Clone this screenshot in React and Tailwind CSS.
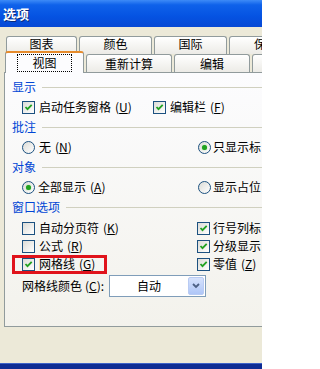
import React from "react";

const font = { fontFamily: '"Noto Sans CJK SC", "Noto Sans", sans-serif' };

function CheckBox({ checked }) {
  return (
    <span className="relative inline-block w-[13px] h-[13px] shrink-0 border border-[#1C5180] bg-gradient-to-br from-[#DCDCD7] to-[#FFFFFF]">
      {checked && (
        <svg viewBox="0 0 11 11" className="absolute left-0 top-0 w-[11px] h-[11px]">
          <path d="M2.5 5 L4.5 7.2 L8.7 2.8" fill="none" stroke="#21A121" strokeWidth="1.8" />
        </svg>
      )}
    </span>
  );
}

function Radio({ checked }) {
  return (
    <span className="flex items-center justify-center w-[13px] h-[13px] shrink-0 rounded-full border border-[#1C5180] bg-gradient-to-br from-[#DCDCD7] to-[#FFFFFF]">
      {checked && <span className="w-[5px] h-[5px] rounded-full bg-[#21A121] shadow-[0_0_1px_#55D551]" />}
    </span>
  );
}

function Key({ k }) {
  return (
    <span className="ml-[4px]">
      (<span className="underline">{k}</span>)
    </span>
  );
}

function Heading({ children }) {
  return (
    <div className="flex items-center h-[20px] pl-[7px]">
      <span className="text-[#0046D5]">{children}</span>
      <div className="flex-1 h-px bg-[#D0D0BF] ml-[6px]" />
    </div>
  );
}

function Item({ box, label, k, gap = "gap-[4px]" }) {
  return (
    <div className={`flex items-center ${gap} whitespace-nowrap`}>
      {box}
      <span>
        {label}
        {k && <Key k={k} />}
      </span>
    </div>
  );
}

function BackTab({ w, label, align = "justify-center" }) {
  return (
    <div
      className={`${w} h-[18px] mr-[2px] shrink-0 flex ${align} pt-[1px] border border-b-0 border-[#919B9C] rounded-t-[3px] bg-gradient-to-b from-[#FFFFFF] to-[#ECEBE6]`}
    >
      {label}
    </div>
  );
}

function FrontTab({ w, label }) {
  return (
    <div
      className={`${w} h-[18px] mr-[2px] shrink-0 flex items-center justify-center border border-b-0 border-[#919B9C] rounded-t-[3px] bg-gradient-to-b from-[#FFFFFF] to-[#ECEBE6]`}
    >
      {label}
    </div>
  );
}

export default function App() {
  return (
    <div className="w-[262px] h-[369px] overflow-hidden bg-[#ECE9D8] flex flex-col text-[12px] leading-none text-black" style={font}>
      {/* title bar */}
      <div className="h-[27px] shrink-0 flex items-center pl-[3px] bg-[linear-gradient(to_bottom,#3D8BF7_0%,#0F62EA_18%,#0553E2_60%,#0748D4_100%)]">
        <span className="text-white font-bold text-[13px] [text-shadow:1px_1px_0_#0A2A7A]">选项</span>
      </div>

      {/* tabs */}
      <div className="mt-[9px] h-[18px] flex pl-[6px] shrink-0">
        <BackTab w="w-[71px]" label="图表" />
        <BackTab w="w-[73px]" label="颜色" />
        <BackTab w="w-[73px]" label="国际" />
        <BackTab w="w-[40px]" label="保" align="justify-start pl-[24px]" />
      </div>
      <div className="relative z-10 -mt-[3px] h-[21px] flex items-end pl-[5px] shrink-0">
        <div className="w-[79px] h-[22px] -mb-[1px] mr-[2px] shrink-0 flex items-center justify-center border border-b-0 border-[#919B9C] border-t-[#E68B2C] border-t-2 rounded-t-[3px] bg-[#FCFCFE]">
          <span className="px-[14px] py-[2px] border border-dotted border-black">视图</span>
        </div>
        <FrontTab w="w-[86px]" label="重新计算" />
        <FrontTab w="w-[76px]" label="编辑" />
        <FrontTab w="w-[20px]" label="" />
      </div>

      {/* panel */}
      <div className="ml-[4px] h-[255px] shrink-0 border-l border-t border-b border-[#919B9C] bg-gradient-to-b from-[#FCFCFE] to-[#F3F2EC] flex flex-col pt-[4px]">
        <Heading>显示</Heading>
        <div className="h-[20px] flex items-center pl-[17px]">
          <div className="w-[131px] shrink-0">
            <Item box={<CheckBox checked />} label="启动任务窗格" k="U" />
          </div>
          <Item box={<CheckBox checked />} label="编辑栏" k="F" />
        </div>

        <Heading>批注</Heading>
        <div className="h-[20px] flex items-center pl-[17px]">
          <div className="w-[176px] shrink-0">
            <Item box={<Radio />} label="无" k="N" />
          </div>
          <Item box={<Radio checked />} label="只显示标" gap="gap-[2px]" />
        </div>

        <Heading>对象</Heading>
        <div className="h-[20px] flex items-center pl-[17px]">
          <div className="w-[176px] shrink-0">
            <Item box={<Radio checked />} label="全部显示" k="A" gap="gap-[3px]" />
          </div>
          <Item box={<Radio />} label="显示占位" gap="gap-[2px]" />
        </div>

        <Heading>窗口选项</Heading>
        <div className="mt-[2px] h-[18px] flex items-center pl-[17px]">
          <div className="w-[175px] shrink-0">
            <Item box={<CheckBox />} label="自动分页符" k="K" />
          </div>
          <Item box={<CheckBox checked />} label="行号列标" gap="gap-[3px]" />
        </div>
        <div className="h-[18px] flex items-center pl-[17px]">
          <div className="w-[175px] shrink-0">
            <Item box={<CheckBox />} label="公式" k="R" />
          </div>
          <Item box={<CheckBox checked />} label="分级显示" gap="gap-[3px]" />
        </div>
        <div className="h-[18px] flex items-center pl-[17px]">
          <div className="relative w-[175px] h-full flex items-center shrink-0">
            <Item box={<CheckBox checked />} label="网格线" k="G" />
            <div className="absolute -left-[10px] top-0 w-[95px] h-[19px] border-[3px] border-[#E0131B]" />
          </div>
          <Item box={<CheckBox checked />} label="零值" k="Z" gap="gap-[3px]" />
        </div>

        <div className="mt-[2px] h-[22px] flex items-center pl-[17px]">
          <span className="w-[87px] shrink-0 whitespace-nowrap">
            网格线颜色<span className="ml-[3px]">(<span className="underline">C</span>):</span>
          </span>
          <div className="w-[97px] h-[22px] border border-[#7F9DB9] bg-white flex items-center">
            <span className="flex-1 text-center">自动</span>
            <div className="w-[16px] h-[18px] mr-[1px] rounded-[2px] border border-[#B9CBF3] bg-gradient-to-b from-[#D6E2FC] to-[#AFC6F7] flex items-center justify-center">
              <svg viewBox="0 0 8 6" className="w-[8px] h-[6px]">
                <path d="M1 1 L4 4 L7 1" fill="none" stroke="#4D6185" strokeWidth="1.8" />
              </svg>
            </div>
          </div>
        </div>
      </div>

      <div className="flex-1" />
      <div className="h-[6px] shrink-0 border-t border-[#3D62C8] bg-[#0E2C93]" />
    </div>
  );
}
